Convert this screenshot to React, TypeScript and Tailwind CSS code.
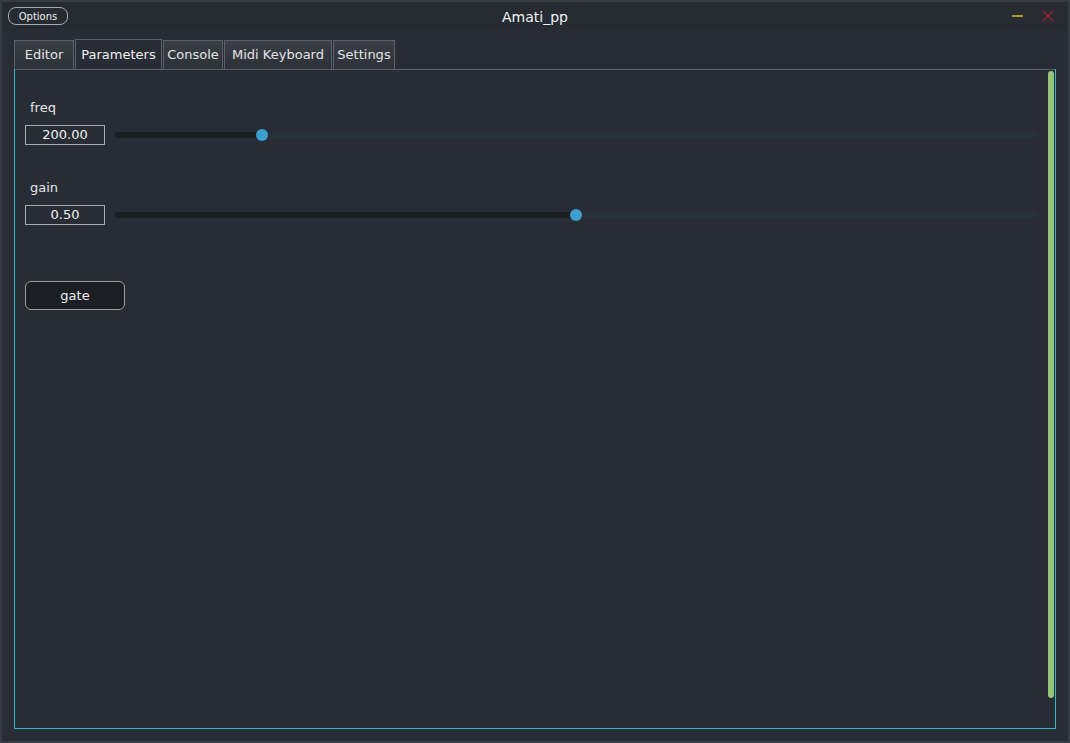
import React from "react";

const font = { fontFamily: '"DejaVu Sans", "Liberation Sans", sans-serif' };

function Slider({ label, value, pos }: { label: string; value: string; pos: number }) {
  return (
    <div className="flex flex-col">
      <div className="h-[20px] pl-[5px] text-[13px] leading-[20px] text-[#e6e6e6]">{label}</div>
      <div className="mt-[7px] flex h-[20px] items-center">
        <div className="flex h-[20px] w-[80px] items-center justify-center border border-[#a9adb1] text-[13px] text-[#f0f0f0]">
          {value}
        </div>
        <div className="relative ml-[10px] h-[6px] w-[923px] rounded-full bg-[#273236]">
          <div className="absolute left-0 top-0 h-[6px] rounded-full bg-[#1a1e21]" style={{ width: pos }} />
          <div
            className="absolute top-[-3px] h-[12px] w-[12px] rounded-full bg-[#3c9fcd]"
            style={{ left: pos - 6 }}
          />
        </div>
      </div>
    </div>
  );
}

export default function App() {
  const tabs = [
    { name: "Editor", w: 60 },
    { name: "Parameters", w: 87, active: true },
    { name: "Console", w: 60 },
    { name: "Midi Keyboard", w: 108 },
    { name: "Settings", w: 62 },
  ];
  return (
    <div
      className="flex h-[743px] w-[1070px] flex-col border-[2px] border-[#353d42] bg-[#282c34] text-[#e6e6e6]"
      style={font}
    >
      <div className="relative flex h-[28px] items-center bg-[#252b31]">
        <div className="ml-[6px] flex h-[18px] w-[60px] items-center justify-center rounded-[8px] border border-[#a8acb0] text-[10px] text-[#eeeeee]">
          Options
        </div>
        <div className="absolute left-0 right-0 top-[6px] text-center text-[14px] leading-[18px] text-[#f2f2f2]">
          Amati_pp
        </div>
        <div className="ml-auto mr-[14px] flex items-center gap-[19px]">
          <div className="h-[2px] w-[11px] bg-[#b39a2a]" />
          <svg width="12" height="12" viewBox="0 0 12 12">
            <path d="M1 1L11 11M11 1L1 11" stroke="#a3202e" strokeWidth="1.4" />
          </svg>
        </div>
      </div>
      <div className="mt-[10px] flex h-[29px] items-end gap-[1px] pl-[12px]">
        {tabs.map((t) => (
          <div
            key={t.name}
            className={
              t.active
                ? "flex h-[30px] items-center justify-center border border-b-0 border-[#5b6168] bg-[#282c34] text-[13px] text-[#f0f0f0]"
                : "flex h-[29px] items-center justify-center border border-b-0 border-[#5b6168] bg-gradient-to-b from-[#3b4047] to-[#2c3037] text-[13px] text-[#e4e4e4]"
            }
            style={{ width: t.w }}
          >
            {t.name}
          </div>
        ))}
      </div>
      <div className="relative ml-[12px] h-[660px] w-[1042px] border border-t-[#5b6168] border-l-[#3ab7c7] border-r-[#3ab7c7] border-b-[#3ab7c7]">
        <div className="absolute right-[1px] top-[1px] h-[627px] w-[6px] rounded-full bg-[#98c479]" />
        <div className="flex flex-col pl-[10px] pt-[28px]">
          <Slider label="freq" value="200.00" pos={147} />
          <div className="mt-[33px]">
            <Slider label="gain" value="0.50" pos={461} />
          </div>
          <div className="mt-[56px] flex h-[29px] w-[100px] items-center justify-center rounded-[6px] border border-[#9a9ea2] bg-[#1b1f23] text-[13px] text-[#f0f0f0]">
            gate
          </div>
        </div>
      </div>
    </div>
  );
}
